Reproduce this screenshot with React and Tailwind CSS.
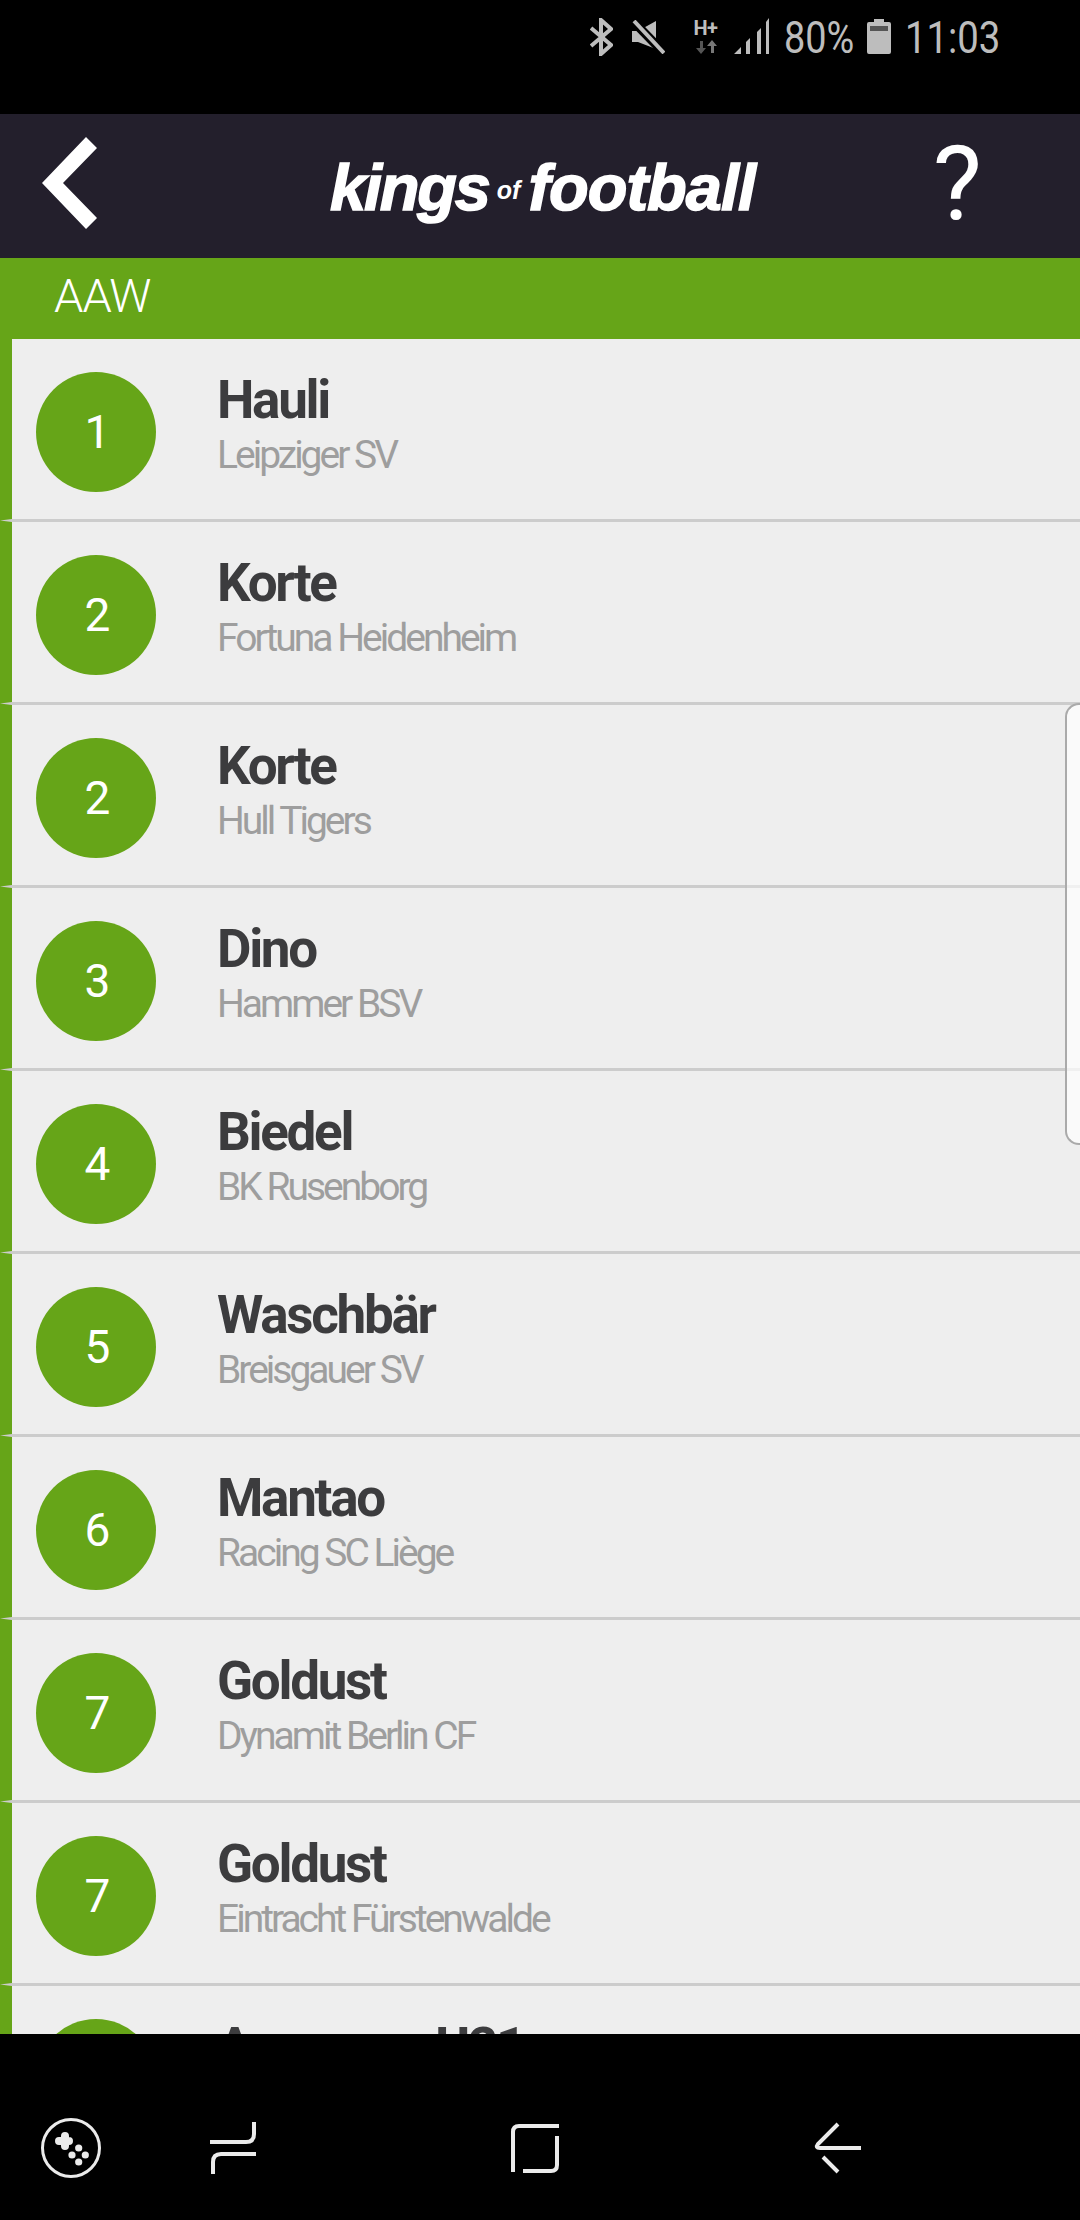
const rows = [
  ["1", "Hauli", "Leipziger SV"],
  ["2", "Korte", "Fortuna Heidenheim"],
  ["2", "Korte", "Hull Tigers"],
  ["3", "Dino", "Hammer BSV"],
  ["4", "Biedel", "BK Rusenborg"],
  ["5", "Waschbär", "Breisgauer SV"],
  ["6", "Mantao", "Racing SC Liège"],
  ["7", "Goldust", "Dynamit Berlin CF"],
  ["7", "Goldust", "Eintracht Fürstenwalde"],
  ["8", "Amazona U21", ""],
];

function Row({ n, name, team }) {
  return (
    <div className="relative flex h-[183px] shrink-0 border-b-[3px] border-[#cccccc] bg-[#eeeeee] pl-[24px] pt-[33px]">
      <div className="flex h-[120px] w-[120px] shrink-0 items-center justify-center rounded-full bg-[#66a518] pl-[3px] text-[46px] leading-none font-normal text-white">{n}</div>
      <div className="-mt-[2px] ml-[61px]">
        <div className="text-[53px] leading-[60px] font-bold tracking-[-2.3px] whitespace-nowrap text-[#3c3c3e]">{name}</div>
        <div className="mt-[2px] text-[39px] leading-[47px] tracking-[-3px] whitespace-nowrap text-[#9e9e9e]">{team}</div>
      </div>
      <span className="absolute -bottom-[3px] -left-[12px] h-[3px] w-[12px] bg-[#cccccc] [clip-path:polygon(0_50%,100%_0,100%_100%)]" />
    </div>
  );
}

export default function App() {
  return (
    <div className="relative flex h-[2220px] w-[1080px] flex-col overflow-hidden bg-black font-['Roboto',sans-serif]">
      <div className="flex h-[114px] shrink-0 items-start bg-black pl-[590px] pt-[16px] text-[#bdbdbd]">
        <svg width="23" height="38" viewBox="0 0 23 38" className="mt-[2px]" fill="none" stroke="#bdbdbd" strokeWidth="4">
          <path d="M1 10 21 27 11 36V2l10 9L1 28" />
        </svg>
        <svg width="33" height="34" viewBox="0 0 33 34" className="ml-[19px] mt-[4px]">
          <path d="M0 11h6L24 1v28L6 22H0z" fill="#bdbdbd" />
          <path d="M0 0l32 33" stroke="#000" strokeWidth="9" />
          <path d="M2 1l30 32" stroke="#bdbdbd" strokeWidth="4" />
        </svg>
        <div className="ml-[28px] mt-[3px] flex w-[25px] flex-col items-center">
          <span className="text-[20px] leading-[18px] font-bold tracking-[-0.5px] whitespace-nowrap text-[#bdbdbd]">H+</span>
          <svg width="22" height="14" viewBox="0 0 22 14" className="mt-[3px]">
            <path d="M5 1v7H1l5 6 5-6H8V1z" fill="#555" />
            <path d="M16 13V6h-4l5-6 5 6h-3v7z" fill="#777" />
          </svg>
        </div>
        <svg width="35" height="36" viewBox="0 0 35 36" className="ml-[16px] mt-[2px]" fill="#bdbdbd">
          <path d="M0 36 7 29v7zM12 24l4-4v16h-4zM23 14l4-4v26h-4zM32 4l3-4v36h-3z" />
        </svg>
        <span className="ml-[15px] inline-block w-[70px] origin-left scale-x-[.86] text-[44px] leading-[44px] font-normal">80%</span>
        <svg width="24" height="35" viewBox="0 0 24 35" className="ml-[13px] mt-[3px]">
          <path d="M7 0h10v3h5a2 2 0 0 1 2 2v28a2 2 0 0 1-2 2H2a2 2 0 0 1-2-2V5a2 2 0 0 1 2-2h5z" fill="#bdbdbd" />
          <rect x="3" y="7" width="18" height="5" fill="#555" />
        </svg>
        <span className="ml-[14px] inline-block w-[95px] origin-left scale-x-[.87] text-[44px] leading-[44px] font-normal whitespace-nowrap">11:03</span>
      </div>

      <div className="flex h-[144px] shrink-0 items-center bg-[#231f2c]">
        <svg width="60" height="92" viewBox="0 0 60 92" className="mb-[6px] ml-[42px]" fill="#fff">
          <path d="M44 0 55 11 21 46 55 81 44 92 0 46z" />
        </svg>
        <div className="mt-[2px] ml-[228px] flex items-baseline whitespace-nowrap font-['Liberation_Sans',sans-serif] font-bold italic text-white [-webkit-text-stroke:1.5px_white]">
          <span className="text-[65px] leading-none tracking-[-2.2px]">kings</span>
          <span className="mx-[8px] -translate-y-[11px] text-[25px] leading-none [-webkit-text-stroke:0px]">of</span>
          <span className="text-[65px] leading-none tracking-[-1px]">football</span>
        </div>
        <div className="mb-[4px] ml-auto mr-[98px] text-[104px] leading-none font-normal text-white">?</div>
      </div>

      <div className="flex h-[81px] shrink-0 items-center bg-[#66a518] pb-[5px] pl-[54px] text-[47px] font-light tracking-[-1px] text-white">AAW</div>

      <div className="min-h-0 flex-1 overflow-hidden bg-[#66a518] pl-[12px]">
        <div className="flex flex-col">
          {rows.map((r, i) => (
            <Row key={i} n={r[0]} name={r[1]} team={r[2]} />
          ))}
        </div>
      </div>

      <div className="h-[186px] shrink-0 bg-black">
        <svg width="1080" height="186" viewBox="0 2034 1080 186" fill="none" stroke="#ebebeb" strokeWidth="4">
          <circle cx="71" cy="2148" r="28.5" strokeWidth="3" />
          <path d="M65 2136v10M59 2141h10" strokeWidth="8" strokeLinecap="round" />
          <g fill="#ebebeb" stroke="none">
            <circle cx="78.7" cy="2148" r="3.6" />
            <circle cx="72" cy="2155" r="3.6" />
            <circle cx="85.3" cy="2155" r="3.6" />
            <circle cx="78.7" cy="2162" r="3.6" />
          </g>
          <path d="M210 2142h36q8 0 8-8v-12M256 2154h-35q-8 0-8 8v12" />
          <path d="M513 2172v-40q0-6 6-6h40M557 2136v29q0 6-6 6h-28" />
          <path d="M838 2124l-20 20q-3 4 2 4h41M823 2157l15 15" />
        </svg>
      </div>

      <div className="absolute left-[1065px] top-[703px] h-[442px] w-[15px] rounded-l-[14px] border-y-2 border-l-2 border-[#aaaaaa] bg-white/70" />
    </div>
  );
}
